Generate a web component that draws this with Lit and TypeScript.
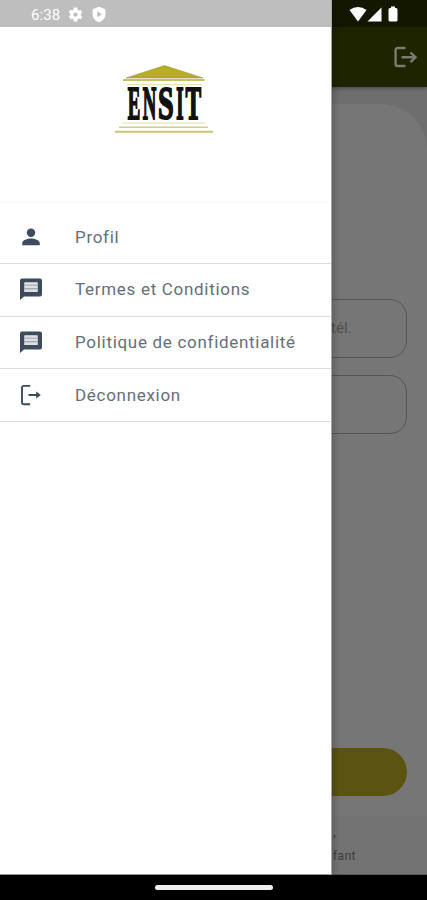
import { LitElement, html, svg, css } from "lit";
import { customElement } from "lit/decorators.js";

const person = svg`<path d="M12 12a4.200 4.200 0 1 0 0-8.400 4.200 4.200 0 0 0 0 8.400zm0 1.500c-3.500 0-8.800 1.500-8.800 4.800v2h17.600v-2c0-3.300-5.300-4.800-8.800-4.800z"/>`;
const message = svg`<path fill-rule="evenodd" d="M3 1.500h18a2 2 0 0 1 2 2v14a2 2 0 0 1-2 2H5l-4 3.500V3.500a2 2 0 0 1 2-2zM5.500 5.500v9.500h13V5.500z"/><path fill="#dcdfe3" d="M5.500 5.500h13v9.500h-13z"/><path opacity=".5" d="M5.500 7.700h13v.8h-13zm0 3.500h13v1h-13z"/>`;
const logout = svg`<path d="M11.200 2.900H4.500A1.500 1.500 0 0 0 3 4.400v15.300a1.500 1.500 0 0 0 1.500 1.500h6.700M9.500 12H19" fill="none" stroke="currentColor" stroke-width="1.900"/><path d="M17.200 8.600 21.800 12l-4.600 3.400z"/>`;

const entries = [
  { label: "Profil", icon: person },
  { label: "Termes et Conditions", icon: message },
  { label: "Politique de confidentialité", icon: message },
  { label: "Déconnexion", icon: logout },
];

// Each letter of the wordmark is condensed by its own factor.
const wordmark = [
  { letter: "E", x: 127.8, scale: 0.4 },
  { letter: "N", x: 142.8, scale: 0.4 },
  { letter: "S", x: 158, scale: 0.6 },
  { letter: "I", x: 176.3, scale: 0.4 },
  { letter: "T", x: 185.6, scale: 0.5 },
];

@customElement("app-root")
export class AppRoot extends LitElement {
  static styles = css`
    :host {
      display: flex;
      flex-direction: column;
      position: relative;
      width: 427px;
      height: 900px;
      overflow: hidden;
      background: #000;
      font-family: Roboto, "Liberation Sans", sans-serif;
    }
    svg { display: block; }
    .page {
      height: 875px;
      display: flex;
      flex-direction: column;
      background: #6e6e6e;
      box-sizing: border-box;
      border-bottom: 1px solid #555;
    }
    .status {
      height: 27px;
      background: #141700;
      display: flex;
      justify-content: flex-end;
      flex: none;
    }
    .appbar {
      height: 60px;
      flex: none;
      background: #1e2300;
      display: flex;
      justify-content: flex-end;
      align-items: center;
      padding-right: 10px;
      box-sizing: border-box;
      box-shadow: 0 1px 4px rgba(0, 0, 0, 0.4);
      z-index: 1;
    }
    .sheet {
      margin-top: 17px;
      flex: 1;
      background: #767676;
      border-radius: 0 46px 0 0;
      display: flex;
      flex-direction: column;
      align-items: flex-end;
    }
    .field {
      width: 386px;
      height: 59px;
      box-sizing: border-box;
      border: 1.5px solid #555;
      border-radius: 17px;
      margin-right: 20.5px;
      font-size: 15px;
      line-height: 56px;
      padding-right: 54px;
      text-align: right;
      color: #505050;
    }
    .phone { margin-top: 195px; }
    .secret { margin-top: 17px; }
    .submit {
      margin: 314px 20.5px 0 0;
      width: 386px;
      height: 48px;
      border-radius: 24px;
      background: #5b5312;
    }
    .note {
      margin-top: 20px;
      align-self: stretch;
      flex: 1;
      background: #737373;
      text-align: right;
      font-size: 12.5px;
      line-height: 20px;
      letter-spacing: 0.3px;
      color: #3f3f3f;
      padding-top: 10px;
      box-sizing: border-box;
    }
    .note div:first-child { padding-right: 91px; line-height: 12px; height: 20px; }
    .note div:last-child { padding-right: 71px; }
    .drawer {
      position: absolute;
      left: 0;
      top: 0;
      width: 332px;
      height: 875px;
      background: #fff;
      border-right: 1px solid #a8a8a8;
      border-bottom: 1px solid #999;
      box-sizing: border-box;
      box-shadow: 1px 0 8px rgba(0, 0, 0, 0.28);
      clip-path: inset(0 -16px 0 0);
      z-index: 2;
    }
    .clock {
      height: 27px;
      box-sizing: border-box;
      background: #bebebe;
      color: #fff;
      display: flex;
      align-items: center;
      padding: 2px 0 0 31px;
      font-size: 15px;
    }
    .clock span { width: 36px; letter-spacing: 0.1px; }
    .clock svg + svg { margin-left: 7px; }
    .brand {
      height: 176px;
      box-sizing: border-box;
      border-bottom: 1px solid #fafafa;
      padding: 36px 0 0 112px;
    }
    nav { padding-top: 8.200px; }
    .entry {
      height: 52.700px;
      box-sizing: border-box;
      border-bottom: 1.5px solid #dadada;
      display: flex;
      align-items: center;
      padding: 0 0 1px 19px;
      color: #3d4b5c;
    }
    .entry span {
      margin-left: 32px;
      font-size: 17px;
      letter-spacing: 0.7px;
      color: #666e79;
      white-space: nowrap;
    }
    .home {
      flex: 1;
      display: flex;
      justify-content: center;
      align-items: center;
    }
    .home i {
      width: 118px;
      height: 5px;
      border-radius: 3px;
      background: #efefef;
    }
  `;

  render() {
    return html`
      <main class="page">
        <div class="status">
          <svg width="90" height="27" viewBox="337 0 90 27" fill="#fff">
            <path d="M349.500 10Q358 4 366.500 10L358 21.500z" />
            <path d="M367.500 21.500 381.500 7.500v14z" />
            <path d="M391 6.500h4v1.500h1q1.500 0 1.500 1.500v10.500q0 1.500-1.500 1.500h-6q-1.500 0-1.500-1.500V9.500q0-1.500 1.500-1.500h1z" />
          </svg>
        </div>
        <header class="appbar">
          <svg width="24" height="24" viewBox="0 0 24 24" fill="none" stroke="#7b7c70" stroke-width="2.400">
            <path d="M12.500 3H4.600A2 2 0 0 0 2.600 5v14a2 2 0 0 0 2 2h7.900M8.500 12.300H22.500M17.500 7.500l5 4.800-5 4.800" />
          </svg>
        </header>
        <section class="sheet">
          <div class="field phone">tél.</div>
          <div class="field secret"></div>
          <div class="submit"></div>
          <footer class="note"><div>,</div><div>fant</div></footer>
        </section>
      </main>
      <aside class="drawer">
        <div class="clock">
          <span>6:38</span>
          <svg width="17" height="17" viewBox="0 0 24 24" fill="#fff">
            <path fill-rule="evenodd" d="M19.400 13v-2l2.200-1.700-2.300-4-2.600 1-1.700-1L14.600 2h-5L9 5.300l-1.700 1-2.600-1-2.300 4L4.600 11v2l-2.200 1.700 2.300 4 2.600-1 1.700 1 .6 3.300h5l.4-3.300 1.700-1 2.600 1 2.300-4zM12 9a3 3 0 1 1 0 6 3 3 0 0 1 0-6z" />
          </svg>
          <svg width="16" height="17" viewBox="0 0 22 24" fill="#fff">
            <path fill-rule="evenodd" d="M11 1 20 4.500V12c0 5-4 9-9 11-5-2-9-6-9-11V4.500zM8.500 7.500v8.500l6.500-4.300z" />
          </svg>
        </div>
        <div class="brand">
          <svg width="104" height="74" viewBox="112 63 104 74">
            <path d="M164.500 65.500 203 78h-77z" fill="#b9ad25" stroke="#958c20" stroke-width=".5" />
            <path d="M123 80h81.500" stroke="#c8c05a" stroke-width="2.200" />
            <path d="M127 84.700h75" stroke="#dedaaf" stroke-width="1" />
            <g font-family="Liberation Serif, serif" font-weight="700" font-size="47" fill="#111" stroke="#111" stroke-width="2">
              ${wordmark.map(
                (w) => svg`<text transform="translate(${w.x} 119.300) scale(${w.scale} 1)">${w.letter}</text>`,
              )}
            </g>
            <path d="M122 123h83" stroke="#dfdba8" stroke-width="1.200" />
            <path d="M119 127.200h89" stroke="#d3cd86" stroke-width="1.500" />
            <path d="M115 131.800h98" stroke="#cbc570" stroke-width="2" />
          </svg>
        </div>
        <nav>
          ${entries.map(
            (entry) => html`
              <div class="entry">
                <svg width="24" height="24" viewBox="0 0 24 24" fill="currentColor">${entry.icon}</svg>
                <span>${entry.label}</span>
              </div>
            `,
          )}
        </nav>
      </aside>
      <div class="home"><i></i></div>
    `;
  }
}
